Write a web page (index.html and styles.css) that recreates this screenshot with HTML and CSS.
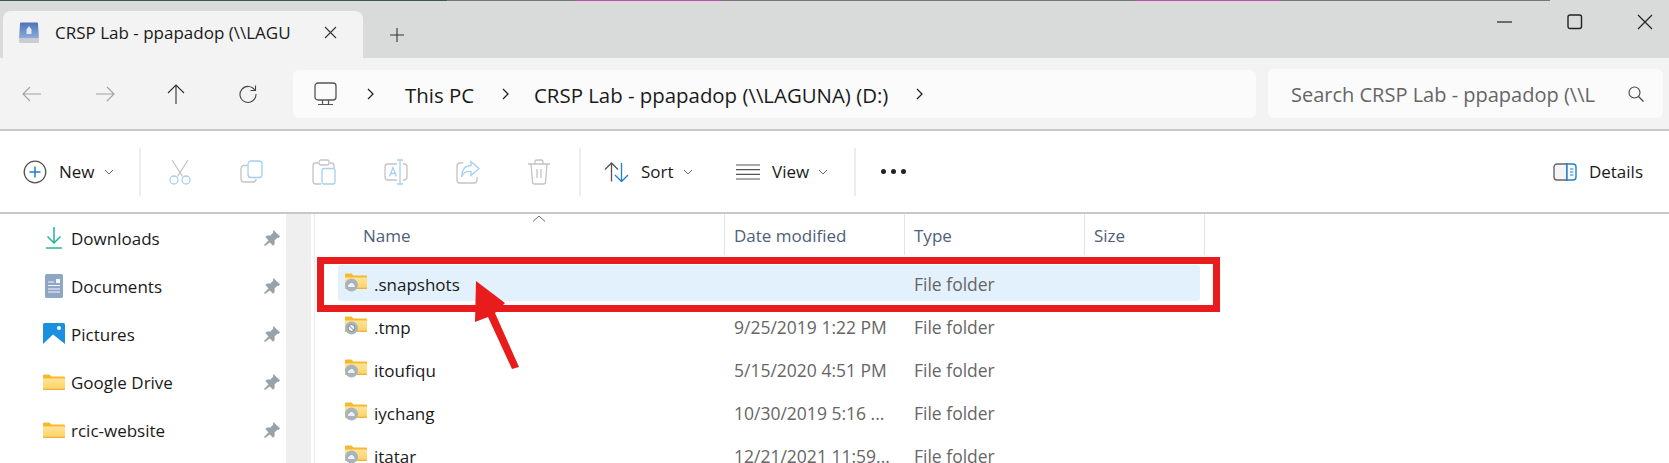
FILE: index.html
```html
<!DOCTYPE html>
<html lang="en">
<head>
    <meta charset="UTF-8">
    <title>CRSP Lab - ppapadop</title>
    <link rel="stylesheet" href="styles.css">
</head>
<body>
    <svg width="0" height="0" class="defs">
        <defs>
            <linearGradient id="folder-fill" x1="0" y1="0" x2="0" y2="1">
                <stop offset="0" stop-color="#ffe49a"/>
                <stop offset="1" stop-color="#fbd05f"/>
            </linearGradient>
            <linearGradient id="drive-fill" x1="0" y1="0" x2="0" y2="1">
                <stop offset="0" stop-color="#4a72b8"/>
                <stop offset="1" stop-color="#8fb0dc"/>
            </linearGradient>
            <symbol id="folder" viewBox="0 0 22 18">
                <path d="M0 2.500a1 1 0 0 1 1-1h5.500l2 2H21a1 1 0 0 1 1 1V16a1 1 0 0 1-1 1H1a1 1 0 0 1-1-1z" fill="#f5b92e"/>
                <path d="M0 5.500h21a1 1 0 0 1 1 1V16a1 1 0 0 1-1 1H1a1 1 0 0 1-1-1z" fill="url(#folder-fill)"/>
                <path d="M0 15.800h22V16a1 1 0 0 1-1 1H1a1 1 0 0 1-1-1z" fill="#eeb038"/>
            </symbol>
            <symbol id="pin" viewBox="0 0 16 16">
                <path d="M9.500 0 16 6.500l-1.500 1.500-1.200-.2-2.800 2.800.2 3.400-1.700 1.700-3.300-3.300L1 16l-1-1 4.500-4.700-3.200-3.200 1.700-1.700 3.400.2 2.800-2.800-.2-1.200z" fill="#98a2aa"/>
            </symbol>
            <symbol id="caret" viewBox="0 0 10 6">
                <path d="M1 1l4 4 4-4" fill="none" stroke="#6a6a6a" stroke-width="1"/>
            </symbol>
            <symbol id="badge-cloud" viewBox="0 0 22 22">
                <use href="#folder" width="22" height="18"/>
                <circle cx="6.500" cy="13" r="6.500" fill="#aab4bc"/>
                <path d="M3.300 15.500a2 2 0 0 1 .8-3.500 2.600 2.600 0 0 1 4.900.300 1.800 1.800 0 0 1 .3 3.200z" fill="#eef1f3" stroke="#8c98a2" stroke-width=".6"/>
            </symbol>
        </defs>
    </svg>

    <div class="strip"></div>

    <div class="titlebar">
        <div class="tab">
            <svg class="drive" width="22" height="22" viewBox="0 0 22 22">
                <path d="M3 .5h16a1 1 0 0 1 1 1L21 17H1L2 1.500a1 1 0 0 1 1-1z" fill="url(#drive-fill)"/>
                <path d="M11 4l2.500 3.500V12h-5V7.500z" fill="#dfe8f6"/>
                <path d="M1 16h20v4a1 1 0 0 1-1 1H2a1 1 0 0 1-1-1z" fill="#c9ccd0"/>
            </svg>
            <span class="tab-label">CRSP Lab - ppapadop (\\LAGU</span>
            <svg class="tab-close" width="13" height="13" viewBox="0 0 13 13"><path d="M1 1l11 11M12 1L1 12" stroke="#333" stroke-width="1.100" fill="none"/></svg>
        </div>
        <svg class="tab-add" width="14" height="14" viewBox="0 0 14 14"><path d="M7 0v14M0 7h14" stroke="#333" stroke-width="1.100"/></svg>
        <div class="window-buttons">
            <svg width="16" height="16" viewBox="0 0 16 16"><path d="M0 8h15" stroke="#222" stroke-width="1.200"/></svg>
            <svg width="16" height="16" viewBox="0 0 16 16"><rect x="1" y="1" width="13.500" height="13.500" rx="2" fill="none" stroke="#222" stroke-width="1.400"/></svg>
            <svg width="16" height="16" viewBox="0 0 16 16"><path d="M1 1l14 14M15 1L1 15" stroke="#222" stroke-width="1.200" fill="none"/></svg>
        </div>
    </div>

    <div class="navbar">
        <div class="nav-buttons">
            <svg width="20" height="16" viewBox="0 0 20 16"><path d="M19 8H1M8 1L1 8l7 7" fill="none" stroke="#a2a2a2" stroke-width="1.100"/></svg>
            <svg width="20" height="16" viewBox="0 0 20 16"><path d="M1 8h18M12 1l7 7-7 7" fill="none" stroke="#a2a2a2" stroke-width="1.100"/></svg>
            <svg width="18" height="20" viewBox="0 0 18 20"><path d="M9 20V1M1 9l8-8 8 8" fill="none" stroke="#333" stroke-width="1.100"/></svg>
            <svg width="20" height="20" viewBox="0 0 20 20"><path d="M17 6.500A8 8 0 1 0 18 10M12.500 6.500H17.500V1.500" fill="none" stroke="#444" stroke-width="1.100"/></svg>
        </div>
        <div class="address">
            <svg class="monitor" width="23" height="24" viewBox="0 0 23 24"><rect x="1" y="1" width="21" height="17" rx="3" fill="none" stroke="#555" stroke-width="1.300"/><path d="M8.500 18v4M14.500 18v4M4 22.500h15" stroke="#555" stroke-width="1.200" fill="none"/></svg>
            <svg class="crumb-sep first" width="8" height="12" viewBox="0 0 8 12"><path d="M1 1l5 5-5 5" fill="none" stroke="#222" stroke-width="1.300"/></svg>
            <span class="crumb">This PC</span>
            <svg class="crumb-sep" width="8" height="12" viewBox="0 0 8 12"><path d="M1 1l5 5-5 5" fill="none" stroke="#222" stroke-width="1.300"/></svg>
            <span class="crumb">CRSP Lab - ppapadop (\\LAGUNA) (D:)</span>
            <svg class="crumb-sep" width="8" height="12" viewBox="0 0 8 12"><path d="M1 1l5 5-5 5" fill="none" stroke="#222" stroke-width="1.300"/></svg>
        </div>
        <div class="search">
            <span class="search-text">Search CRSP Lab - ppapadop (\\L</span>
            <svg width="16" height="16" viewBox="0 0 16 16"><circle cx="6.500" cy="6.500" r="5.500" fill="none" stroke="#444" stroke-width="1.100"/><path d="M10.500 10.500l5 5" stroke="#444" stroke-width="1.200"/></svg>
        </div>
    </div>

    <div class="commandbar">
        <div class="cmd-new">
            <svg width="24" height="24" viewBox="0 0 24 24"><circle cx="12" cy="12" r="10.800" fill="none" stroke="#555" stroke-width="1.300"/><path d="M12 6.500v11M6.500 12h11" stroke="#1a7fd4" stroke-width="1.500"/></svg>
            <span class="cmd-label">New</span>
            <svg width="10" height="6"><use href="#caret"/></svg>
        </div>
        <div class="cmd-sep"></div>
        <div class="cmd-icons">
            <svg width="24" height="26" viewBox="0 0 24 26"><path d="M4 1l10.500 16.500M20 1L9.500 17.500" fill="none" stroke="#c4c4c4" stroke-width="1.300"/><circle cx="6" cy="21" r="4" fill="none" stroke="#a5d0f2" stroke-width="1.300"/><circle cx="18" cy="21" r="4" fill="none" stroke="#a5d0f2" stroke-width="1.300"/></svg>
            <svg width="24" height="24" viewBox="0 0 24 24"><path d="M7 5.500H4a3 3 0 0 0-3 3V19a3 3 0 0 0 3 3h9a3 3 0 0 0 3-3" fill="none" stroke="#c4c4c4" stroke-width="1.300"/><rect x="8" y="1" width="14" height="16.500" rx="3" fill="none" stroke="#a5d0f2" stroke-width="1.300"/></svg>
            <svg width="24" height="26" viewBox="0 0 24 26"><path d="M6 4H4a3 3 0 0 0-3 3v15a3 3 0 0 0 3 3h5M18 4h1a3 3 0 0 1 3 3v2" fill="none" stroke="#c4c4c4" stroke-width="1.300"/><rect x="7" y="1" width="10" height="5" rx="2" fill="none" stroke="#c4c4c4" stroke-width="1.300"/><rect x="10" y="9.500" width="13" height="15.500" rx="2" fill="none" stroke="#a5d0f2" stroke-width="1.300"/></svg>
            <svg width="24" height="26" viewBox="0 0 24 26"><path d="M13 5H4a3 3 0 0 0-3 3v10a3 3 0 0 0 3 3h9M19 5h1.500A2.500 2.500 0 0 1 23 8v10a3 3 0 0 1-3 3h-1" fill="none" stroke="#c4c4c4" stroke-width="1.300"/><path d="M13 1h6M16 1v24M13 25h6" fill="none" stroke="#a5d0f2" stroke-width="1.300"/><path d="M5.500 17.500L9 8.500l3.500 9M6.800 14.500h4.500" fill="none" stroke="#a5d0f2" stroke-width="1.300"/></svg>
            <svg width="24" height="24" viewBox="0 0 24 24"><path d="M7 3H4a3 3 0 0 0-3 3v14a3 3 0 0 0 3 3h14a3 3 0 0 0 3-3v-3" fill="none" stroke="#c4c4c4" stroke-width="1.300"/><path d="M15 1.500l8 7-8 7v-4C10 11 7 13 5.500 17c0-6 3-11.500 9.500-11.500z" fill="none" stroke="#a5d0f2" stroke-width="1.300"/></svg>
            <svg width="22" height="26" viewBox="0 0 22 26"><path d="M0 5h22M7 5V3a2 2 0 0 1 2-2h4a2 2 0 0 1 2 2v2M3 5l1.500 18a2 2 0 0 0 2 2h9a2 2 0 0 0 2-2L19 5M9 10v9M13 10v9" fill="none" stroke="#c4c4c4" stroke-width="1.300"/></svg>
        </div>
        <div class="cmd-sep"></div>
        <div class="cmd-sort">
            <svg width="25" height="20" viewBox="0 0 25 20"><path d="M7.500 19.500V1M1 7.500L7.500 1 14 7.500" fill="none" stroke="#555" stroke-width="1.300"/><path d="M17.500 1v18.500M11 13l6.500 6.500L24 13" fill="none" stroke="#1a7fd4" stroke-width="1.300"/></svg>
            <span class="cmd-label">Sort</span>
            <svg width="10" height="6"><use href="#caret"/></svg>
        </div>
        <div class="cmd-view">
            <svg width="24" height="16" viewBox="0 0 24 16"><path d="M0 1h24M0 5.700h24M0 10.300h24M0 15h24" stroke="#555" stroke-width="1.200"/></svg>
            <span class="cmd-label">View</span>
            <svg width="10" height="6"><use href="#caret"/></svg>
        </div>
        <div class="cmd-sep"></div>
        <div class="cmd-more"><i></i><i></i><i></i></div>
        <div class="cmd-details">
            <svg width="24" height="18" viewBox="0 0 24 18"><path d="M14 1H4a3 3 0 0 0-3 3v10a3 3 0 0 0 3 3h10z" fill="#f5f5f5" stroke="#666" stroke-width="1.400"/><path d="M14 1h6a3 3 0 0 1 3 3v10a3 3 0 0 1-3 3h-6z" fill="white" stroke="#1a7fd4" stroke-width="1.400"/><path d="M17 6h3.500M17 9h3.500M17 12h3.500" stroke="#1a7fd4" stroke-width="1.200"/></svg>
            <span class="cmd-label">Details</span>
        </div>
    </div>

    <div class="content">
        <div class="sidebar">
            <div class="side-row">
                <svg class="side-icon" width="16" height="22" viewBox="0 0 16 22"><path d="M8 0v16M1.500 9.500L8 16l6.500-6.500" fill="none" stroke="#22b894" stroke-width="1.500"/><path d="M0 21h16" stroke="#22b894" stroke-width="1.500"/></svg>
                <span class="side-label">Downloads</span>
                <svg class="pin" width="16" height="16"><use href="#pin"/></svg>
            </div>
            <div class="side-row">
                <svg class="side-icon" width="18" height="24" viewBox="0 0 18 24"><rect width="18" height="24" rx="1.500" fill="#8ea7c6"/><path d="M3 8h6M3 11.500h12M3 15h12M3 18h12" stroke="#f4f7fb" stroke-width="1"/><rect x="11" y="5" width="4" height="4" fill="#f4f7fb"/></svg>
                <span class="side-label">Documents</span>
                <svg class="pin" width="16" height="16"><use href="#pin"/></svg>
            </div>
            <div class="side-row">
                <svg class="side-icon" width="22" height="22" viewBox="0 0 22 22"><rect width="22" height="22" rx="1.500" fill="#1b8fe0"/><path d="M0 21l10-9.500L22 21v1H0z" fill="#fff"/><circle cx="16" cy="5" r="2" fill="#fff"/></svg>
                <span class="side-label">Pictures</span>
                <svg class="pin" width="16" height="16"><use href="#pin"/></svg>
            </div>
            <div class="side-row">
                <svg class="side-icon" width="22" height="18"><use href="#folder"/></svg>
                <span class="side-label">Google Drive</span>
                <svg class="pin" width="16" height="16"><use href="#pin"/></svg>
            </div>
            <div class="side-row">
                <svg class="side-icon" width="22" height="18"><use href="#folder"/></svg>
                <span class="side-label">rcic-website</span>
                <svg class="pin" width="16" height="16"><use href="#pin"/></svg>
            </div>
        </div>
        <div class="side-scroll"></div>
        <div class="files">
            <svg class="sort-caret" width="14" height="7" viewBox="0 0 14 7"><path d="M1 6.500l6-5.500 6 5.500" fill="none" stroke="#666" stroke-width="1"/></svg>
            <div class="file-head">
                <div class="col col-name">Name</div>
                <div class="col">Date modified</div>
                <div class="col">Type</div>
                <div class="col">Size</div>
            </div>
            <div class="file-row selected">
                <div class="file-name">
                    <svg class="file-icon" width="22" height="22"><use href="#badge-cloud"/></svg>
                    <span>.snapshots</span>
                </div>
                <div class="file-cell"></div>
                <div class="file-cell">File folder</div>
            </div>
            <div class="file-row">
                <div class="file-name">
                    <svg class="file-icon" width="22" height="22" viewBox="0 0 22 22"><use href="#folder" width="22" height="18"/><circle cx="6.500" cy="13" r="6.500" fill="#aab4bc"/><circle cx="6.500" cy="13" r="3.500" fill="#eef1f3" stroke="#7e8a94"/><path d="M4 10.500l5 5" stroke="#7e8a94"/></svg>
                    <span>.tmp</span>
                </div>
                <div class="file-cell">9/25/2019 1:22 PM</div>
                <div class="file-cell">File folder</div>
            </div>
            <div class="file-row">
                <div class="file-name">
                    <svg class="file-icon" width="22" height="22"><use href="#badge-cloud"/></svg>
                    <span>itoufiqu</span>
                </div>
                <div class="file-cell">5/15/2020 4:51 PM</div>
                <div class="file-cell">File folder</div>
            </div>
            <div class="file-row">
                <div class="file-name">
                    <svg class="file-icon" width="22" height="22"><use href="#badge-cloud"/></svg>
                    <span>iychang</span>
                </div>
                <div class="file-cell">10/30/2019 5:16 ...</div>
                <div class="file-cell">File folder</div>
            </div>
            <div class="file-row">
                <div class="file-name">
                    <svg class="file-icon" width="22" height="22"><use href="#badge-cloud"/></svg>
                    <span>itatar</span>
                </div>
                <div class="file-cell">12/21/2021 11:59...</div>
                <div class="file-cell">File folder</div>
            </div>
        </div>
    </div>

    <!-- red annotation drawn over the screenshot -->
    <div class="callout-box"></div>
    <svg class="callout-arrow" width="60" height="100" viewBox="0 0 60 100">
        <path d="M6 1 35 23 25 33 49 87 42 89 18 37 5 42z" fill="#e81c1c"/>
    </svg>
</body>
</html>
```
FILE: styles.css
```css
* {
    box-sizing: border-box;
}
html, body {
    margin: 0;
    height: 100%;
    overflow: hidden;
}
body {
    width: 1669px;
    height: 463px;
    position: relative;
    background-color: white;
    font-family: 'Open Sans', 'Noto Sans', sans-serif;
    font-size: 17px;
    color: #1a1a1a;
}
svg {
    display: block;
    flex: none;
}
.defs {
    position: absolute;
}

/* bit of the window behind, just visible along the top edge */
.strip {
    height: 1px;
    background: linear-gradient(to right,
        #3f5557 0, #3f5557 447px,
        #777 447px, #777 575px,
        #c04fb0 575px, #c04fb0 722px,
        #777 722px, #777 1135px,
        #c04fb0 1135px, #c04fb0 1280px,
        #777 1280px, #777 1550px,
        #d9dbda 1550px);
}

/* title bar with the tab */
.titlebar {
    height: 57px;
    background-color: #d9dbda;
    display: flex;
    align-items: flex-end;
    padding-left: 3px;
}
.tab {
    width: 360px;
    height: 47px;
    background-color: #f3f3f3;
    border-radius: 8px 8px 0 0;
    display: flex;
    align-items: center;
    padding: 0 26px 4px 15px;
}
.tab-label {
    width: 247px;
    margin-left: 15px;
    white-space: nowrap;
}
.tab-close {
    margin-left: 22px;
}
.tab-add {
    margin: 0 0 16px 27px;
}
.window-buttons {
    margin-left: auto;
    align-self: flex-start;
    display: flex;
    gap: 54px;
    padding: 13px 16px 0 0;
}

/* back / forward / address / search */
.navbar {
    height: 73px;
    background-color: #f3f3f3;
    border-bottom: 2px solid #c8c8c8;
    display: flex;
    align-items: center;
    padding: 0 6px 0 0;
}
.nav-buttons {
    width: 293px;
    display: flex;
    align-items: center;
    padding-left: 22px;
    gap: 52.500px;
}
.address {
    width: 963px;
    height: 48px;
    background-color: #fbfbfb;
    border-radius: 6px;
    display: flex;
    align-items: center;
    padding-left: 21px;
    font-size: 20.400px;
    white-space: nowrap;
}
.crumb, .search-text {
    margin-top: 2px;
}
.crumb-sep {
    margin: 0 24px 0 28px;
}
.crumb-sep.first {
    margin: 0 30px;
}
.search {
    width: 395px;
    height: 49px;
    margin-left: 12px;
    background-color: #fbfbfb;
    border-radius: 6px;
    display: flex;
    align-items: center;
    justify-content: space-between;
    padding: 0 19px 0 23px;
    color: #666;
    font-size: 20px;
    white-space: nowrap;
}

/* command bar */
.commandbar {
    height: 83px;
    background-color: white;
    border-bottom: 2px solid #c8c8c8;
    display: flex;
    align-items: center;
    padding-left: 23px;
}
.cmd-label {
    margin: 0 9px 0 12px;
}
.cmd-new, .cmd-sort, .cmd-view, .cmd-details {
    display: flex;
    align-items: center;
}
.cmd-new {
    width: 116px;
}
.cmd-sep {
    width: 2px;
    height: 48px;
    background-color: #ececec;
}
.cmd-icons {
    width: 438px;
    display: flex;
    align-items: center;
    gap: 48px;
    padding-left: 27px;
}
.cmd-sort {
    margin-left: 23px;
    width: 132px;
}
.cmd-view {
    width: 118px;
}
.cmd-more {
    display: flex;
    gap: 5px;
    margin-left: 25px;
}
.cmd-more i {
    width: 5px;
    height: 5px;
    border-radius: 50%;
    background-color: #222;
}
.cmd-details {
    margin-left: auto;
    padding-right: 17px;
}

/* navigation pane and file list */
.content {
    display: flex;
    height: 249px;
    background-color: white;
}
.sidebar {
    width: 286px;
    padding: 0 6px 0 43px;
}
.side-row {
    height: 48px;
    display: flex;
    align-items: center;
}
.side-icon {
    width: 22px;
}
.side-label {
    margin-left: 6px;
}
.pin {
    margin-left: auto;
}
.side-scroll {
    width: 25px;
    background-color: #efefef;
}
.files {
    flex: 1;
    border-left: 3px solid white;
    position: relative;
    box-shadow: inset 1px 0 0 #ececec;
}
.sort-caret {
    position: absolute;
    left: 218px;
    top: 1px;
}
.file-head {
    height: 51px;
    display: grid;
    grid-template-columns: 411px 180px 180px 120px;
    color: #4c607a;
    padding-bottom: 10px;
}
.col {
    padding: 1px 0 0 9px;
    display: flex;
    align-items: center;
    border-right: 1px solid #e4e4e4;
}
.col-name {
    padding-left: 49px;
}
.file-row {
    height: 36px;
    margin: 0 0 7px 24px;
    width: 862px;
    display: grid;
    grid-template-columns: 387px 180px 1fr;
    align-items: center;
    border-radius: 3px;
}
.file-row.selected {
    background-color: #e3f1fc;
}
.file-name {
    display: flex;
    align-items: center;
    padding-left: 7px;
}
.file-name span {
    margin-top: 2px;
}
.file-icon {
    margin-right: 7px;
}
.file-cell {
    color: #666;
    padding: 2px 0 0 9px;
    font-size: 17.500px;
}

/* annotation on top of everything */
.callout-box {
    position: absolute;
    left: 317px;
    top: 257px;
    width: 903px;
    height: 55px;
    border: 7.500px solid #e81c1c;
}
.callout-arrow {
    position: absolute;
    left: 470px;
    top: 280px;
}
```
